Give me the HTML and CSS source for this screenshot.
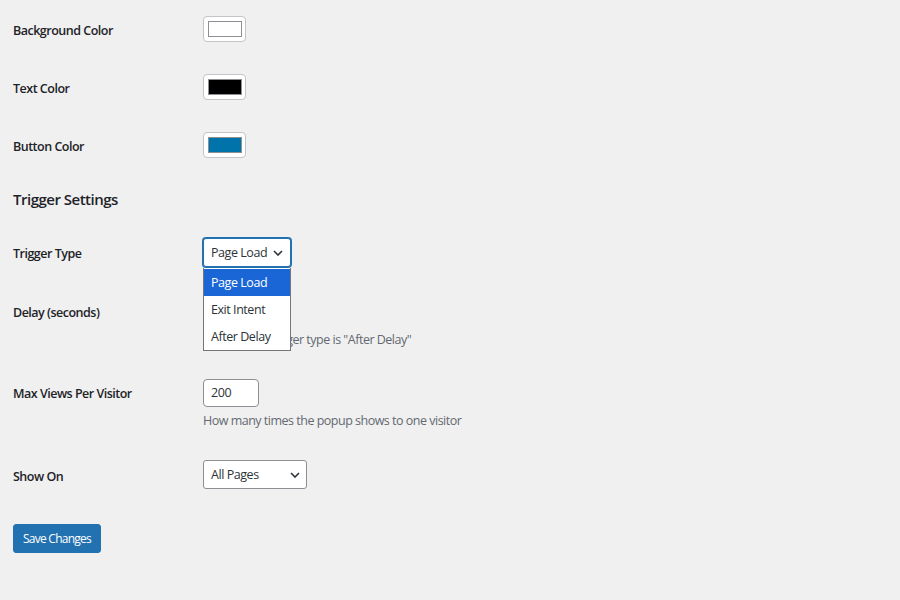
FILE: index.html
```html
<!DOCTYPE html>
<html>
<head>
<meta charset="utf-8">
<link rel="stylesheet" href="styles.css">
</head>
<body>
<form class="settings">
  <div class="row row-color first">
    <div class="label">Background Color</div>
    <div class="field"><span class="swatch-btn"><span class="swatch sw-white"></span></span></div>
  </div>
  <div class="row row-color">
    <div class="label">Text Color</div>
    <div class="field"><span class="swatch-btn"><span class="swatch sw-black"></span></span></div>
  </div>
  <div class="row row-color">
    <div class="label">Button Color</div>
    <div class="field"><span class="swatch-btn"><span class="swatch sw-blue"></span></span></div>
  </div>

  <h2 class="section-title">Trigger Settings</h2>

  <div class="row row-trigger">
    <div class="label label-field">Trigger Type</div>
    <div class="field field-select">
      <div class="select select-focus select-trigger">
        <span class="select-value">Page Load</span>
        <svg class="chev" width="10" height="6" viewBox="0 0 10 6"><path d="M1 1l4 4 4-4" fill="none" stroke="#2c3338" stroke-width="1.6"/></svg>
      </div>
      <ul class="dropdown">
        <li class="opt opt-active">Page Load</li>
        <li class="opt">Exit Intent</li>
        <li class="opt">After Delay</li>
      </ul>
    </div>
  </div>

  <div class="row row-field">
    <div class="label label-field">Delay (seconds)</div>
    <div class="field">
      <div class="input input-small">5</div>
      <p class="desc">Only used if trigger type is "After Delay"</p>
    </div>
  </div>

  <div class="row row-field">
    <div class="label label-field">Max Views Per Visitor</div>
    <div class="field">
      <div class="input input-small">200</div>
      <p class="desc">How many times the popup shows to one visitor</p>
    </div>
  </div>

  <div class="row row-field">
    <div class="label label-field label-show">Show On</div>
    <div class="field">
      <div class="select select-show">
        <span class="select-value">All Pages</span>
        <svg class="chev" width="10" height="6" viewBox="0 0 10 6"><path d="M1 1l4 4 4-4" fill="none" stroke="#2c3338" stroke-width="1.6"/></svg>
      </div>
    </div>
  </div>

  <div class="submit">
    <span class="button-primary">Save Changes</span>
  </div>
</form>
</body>
</html>
```

FILE: styles.css
```css
html, body {
  margin: 0;
  padding: 0;
  background: #f0f0f1;
}
body {
  font-family: "Open Sans", "Noto Sans", "Liberation Sans", sans-serif;
  color: #1d2327;
  font-size: 13px;
}
.settings {
  padding: 0 13px;
  width: 874px;
}
.row {
  display: grid;
  grid-template-columns: 190px 1fr;
  align-items: start;
}
.label {
  font-weight: 600;
  font-size: 12.5px;
  letter-spacing: -0.5px;
  color: #1d2327;
  white-space: nowrap;
}
.row-color {
  padding: 16px 0;
}
.row-color .label {
  line-height: 26px;
  margin-top: 2px;
  margin-bottom: -2px;
}
.swatch-btn {
  display: flex;
  align-items: center;
  justify-content: center;
  width: 41px;
  height: 24px;
  border: 1px solid #c3c4c7;
  border-radius: 4px;
  background: #fff;
  box-sizing: content-box;
}
.swatch {
  display: block;
  width: 32px;
  height: 14px;
  border: 1px solid #8c8f94;
}
.sw-white { background: #ffffff; }
.sw-black { background: #000000; }
.sw-blue { background: #0073aa; }

.section-title {
  margin: 14px 0 0;
  font-size: 15px;
  line-height: 22px;
  font-weight: 600;
  letter-spacing: -0.5px;
  color: #1d2327;
}
.row-trigger {
  margin-top: 28px;
}
.row-field {
  margin-top: 30px;
}
.label-field {
  line-height: 30px;
}
.row-trigger .label-field,
.label-show {
  margin-top: 1px;
  margin-bottom: -1px;
}
.label-show {
  margin-top: 2px;
  margin-bottom: -2px;
}
.field {
  position: relative;
}
.select {
  display: flex;
  align-items: center;
  justify-content: space-between;
  box-sizing: border-box;
  height: 28px;
  padding: 0 7px 0 7px;
  border: 1px solid #8c8f94;
  border-radius: 3px;
  background: #fff;
  color: #2c3338;
  font-size: 12.5px;
  letter-spacing: -0.45px;
  white-space: nowrap;
}
.select-trigger {
  width: 88px;
  height: 29px;
}
.select-focus {
  border-color: #2271b1;
  box-shadow: 0 0 0 1px #2271b1;
}
.select-show {
  width: 104px;
  height: 29px;
  padding-right: 6px;
}
.chev {
  display: block;
  margin-top: 1px;
}
.dropdown {
  position: absolute;
  left: 0;
  top: 30px;
  width: 88px;
  box-sizing: border-box;
  margin: 0;
  padding: 1px 0 0;
  list-style: none;
  background: #fff;
  border: 1px solid #767676;
  border-top: 0;
  z-index: 5;
}
.opt {
  height: 27px;
  line-height: 27px;
  padding-left: 7px;
  font-size: 12.5px;
  letter-spacing: -0.45px;
  color: #2c3338;
  white-space: nowrap;
}
.opt-active {
  background: #1a66d6;
  color: #fff;
}
.input {
  box-sizing: border-box;
  height: 28px;
  line-height: 26px;
  padding: 0 7px;
  border: 1px solid #8c8f94;
  border-radius: 4px;
  background: #fff;
  color: #2c3338;
  font-size: 12.5px;
  letter-spacing: -0.4px;
}
.input-small {
  width: 56px;
}
.desc {
  margin: 5px 0 0;
  font-size: 12.5px;
  line-height: 18px;
  letter-spacing: -0.5px;
  color: #646970;
  white-space: nowrap;
}
.submit {
  margin-top: 34px;
}
.button-primary {
  display: inline-block;
  box-sizing: border-box;
  height: 29px;
  line-height: 27px;
  padding: 0 9px;
  background: #2271b1;
  border: 1px solid #2271b1;
  border-radius: 3px;
  color: #fff;
  font-size: 12px;
  letter-spacing: -0.75px;
}
```
